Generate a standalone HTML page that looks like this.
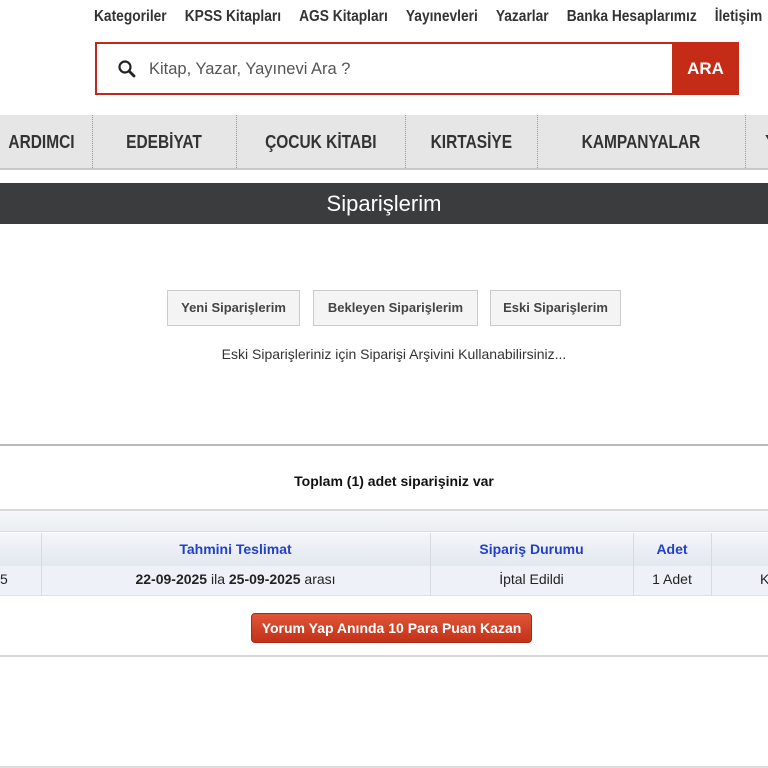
<!DOCTYPE html>
<html><head><meta charset="utf-8"><style>
*{margin:0;padding:0;box-sizing:border-box}
body{width:768px;height:768px;background:#fff;position:relative;overflow:hidden;font-family:"Liberation Sans",sans-serif;color:#222}
.a{position:absolute}
.top{top:8px;left:94px;font-size:16px;color:#333;white-space:nowrap;font-weight:bold;transform:scaleX(0.86);transform-origin:0 0;letter-spacing:0}
.top span{margin-right:21px}
.search{left:95px;top:42px;width:578px;height:53px;border:2px solid #c0281c;border-right:none;background:#fff}
.ara{left:672px;top:42px;width:67px;height:53px;background:#c42c18;color:#fff;font-weight:bold;font-size:17px;text-align:center;line-height:53px}
.nav{left:0;top:115px;width:768px;height:55px;background:#e6e6e6;border-bottom:2px solid #c8c8c8}
.nav div{position:absolute;top:0;height:53px;line-height:55px;font-weight:bold;font-size:18px;color:#333;text-align:center}
.nav div span{display:inline-block;transform:scaleX(0.86)}
.sep{position:absolute;top:0;height:53px;border-left:1px dotted #999}
.bar{left:0;top:183px;width:768px;height:41px;background:#3b3c3e;color:#fff;text-align:center;font-size:22px;line-height:41px}
.btn{top:290px;height:36px;background:#f4f4f4;border:1px solid #ccc;font-weight:bold;font-size:13px;color:#444;text-align:center;line-height:34px}
.hr{left:0;width:768px;height:2px;background:#d8d8d8}
</style></head><body>
<div class="a top"><span>Kategoriler</span><span>KPSS Kitapları</span><span>AGS Kitapları</span><span>Yayınevleri</span><span>Yazarlar</span><span>Banka Hesaplarımız</span><span>İletişim</span></div>
<div class="a search">
<svg class="a" style="left:20px;top:15px" width="20" height="20" viewBox="0 0 20 20"><circle cx="8" cy="8" r="5.5" fill="none" stroke="#222" stroke-width="2.2"/><path d="M12 12l5 5" stroke="#222" stroke-width="2.8" stroke-linecap="round"/></svg>
<div class="a" style="left:52px;top:16px;font-size:16.5px;color:#555">Kitap, Yazar, Yayınevi Ara ?</div>
</div>
<div class="a ara">ARA</div>
<div class="a nav">
<div style="left:-10px;width:102px"><span>ARDIMCI</span></div>
<span class="sep" style="left:92px"></span>
<div style="left:92px;width:144px"><span>EDEBİYAT</span></div>
<span class="sep" style="left:236px"></span>
<div style="left:236px;width:169px"><span>ÇOCUK KİTABI</span></div>
<span class="sep" style="left:405px"></span>
<div style="left:405px;width:132px"><span>KIRTASİYE</span></div>
<span class="sep" style="left:537px"></span>
<div style="left:537px;width:208px"><span>KAMPANYALAR</span></div>
<span class="sep" style="left:745px"></span>
<div style="left:745px;width:30px;text-align:left;padding-left:20px">Y</div>
</div>
<div class="a bar">Siparişlerim</div>
<div class="a btn" style="left:167px;width:133px">Yeni Siparişlerim</div>
<div class="a btn" style="left:313px;width:165px">Bekleyen Siparişlerim</div>
<div class="a btn" style="left:490px;width:131px">Eski Siparişlerim</div>
<div class="a" style="left:0;width:788px;top:346px;text-align:center;font-size:14px;color:#333">Eski Siparişleriniz için Siparişi Arşivini Kullanabilirsiniz...</div>
<div class="a hr" style="top:444px;background:#bbb"></div>
<div class="a" style="left:0;width:788px;top:473px;text-align:center;font-weight:bold;font-size:14px;color:#111">Toplam (1) adet siparişiniz var</div>
<div class="a hr" style="top:509px"></div>
<div class="a" style="left:0;top:511px;width:768px;height:21px;background:linear-gradient(#f5f7f9,#eaeef2);border-bottom:1px solid #d8dde3"></div>
<div class="a" style="left:0;top:533px;width:768px;height:33px;background:linear-gradient(#f3f6fa,#e3e8ef)"></div>
<div class="a" style="left:0;top:566px;width:768px;height:30px;background:#eef2f8;border-bottom:1px solid #dde2e8"></div>
<div class="a" style="left:41px;top:533px;width:1px;height:63px;background:#d6dbe2"></div>
<div class="a" style="left:430px;top:533px;width:1px;height:63px;background:#d6dbe2"></div>
<div class="a" style="left:633px;top:533px;width:1px;height:63px;background:#d6dbe2"></div>
<div class="a" style="left:711px;top:533px;width:1px;height:63px;background:#d6dbe2"></div>
<div class="a" style="left:41px;width:389px;top:541px;text-align:center;color:#2440c8;font-weight:bold;font-size:14px">Tahmini Teslimat</div>
<div class="a" style="left:430px;width:203px;top:541px;text-align:center;color:#2440c8;font-weight:bold;font-size:14px">Sipariş Durumu</div>
<div class="a" style="left:633px;width:78px;top:541px;text-align:center;color:#2440c8;font-weight:bold;font-size:14px">Adet</div>
<div class="a" style="left:0;top:571px;font-size:14px">5</div>
<div class="a" style="left:41px;width:389px;top:571px;text-align:center;font-size:14px"><b>22-09-2025</b> ila <b>25-09-2025</b> arası</div>
<div class="a" style="left:430px;width:203px;top:571px;text-align:center;font-size:14px">İptal Edildi</div>
<div class="a" style="left:633px;width:78px;top:571px;text-align:center;font-size:14px">1 Adet</div>
<div class="a" style="left:760px;top:571px;font-size:14px">K</div>
<div class="a" style="left:251px;top:613px;width:281px;height:30px;border-radius:4px;background:linear-gradient(#e0553a,#c23118);border:1px solid #a82a14;color:#fff;font-weight:bold;font-size:14px;text-align:center;line-height:28px">Yorum Yap Anında 10 Para Puan Kazan</div>
<div class="a hr" style="top:655px"></div>
<div class="a hr" style="top:766px;background:#ddd"></div>
</body></html>
